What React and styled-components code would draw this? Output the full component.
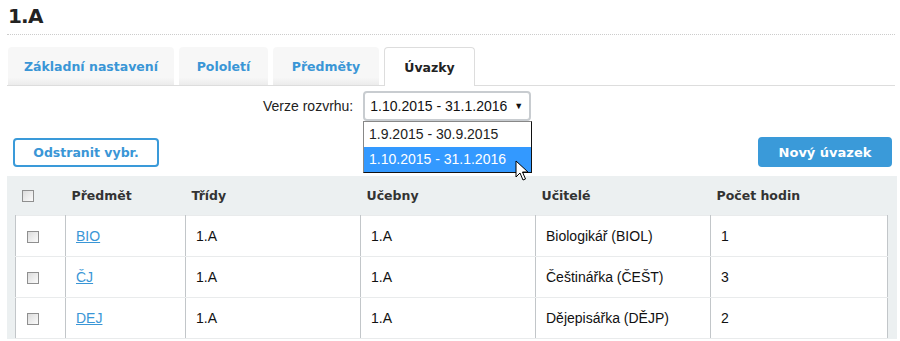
import React from 'react';
import styled, { createGlobalStyle } from 'styled-components';

const GlobalStyle = createGlobalStyle`
  html, body { margin: 0; padding: 0; background: #fff; }
  body { font-family: "Liberation Sans", Arial, sans-serif; font-size: 14px; color: #111; }
`;

const BOLD = `"DejaVu Sans", Verdana, sans-serif`;

const Page = styled.div`
  width: 900px;
  height: 341px;
  overflow: hidden;
  padding: 0 5px 0 7px;
  box-sizing: border-box;
`;

const Title = styled.h1`
  margin: 0;
  padding: 4px 0 0 1px;
  height: 30px;
  box-sizing: border-box;
  height: 35px;
  font-family: ${BOLD};
  font-size: 20px;
  font-weight: 900;
  color: #222;
  letter-spacing: -0.8px;
  border-bottom: 1px dotted #ccc;
`;

const Tabs = styled.div`
  display: flex;
  gap: 5px;
  margin-top: 11px;
  padding-left: 1px;
  border-bottom: 1px solid #ddd;
  height: 39px;
`;

const Tab = styled.div`
  width: ${p => p.w}px;
  height: ${p => (p.active ? 39 : 38)}px;
  box-sizing: border-box;
  display: flex;
  align-items: center;
  justify-content: center;
  font-family: ${BOLD};
  font-size: 12.5px;
  font-weight: bold;
  border-radius: 4px 4px 0 0;
  color: ${p => (p.active ? '#222' : '#3a96d6')};
  background: ${p => (p.active ? '#fff' : 'linear-gradient(#f7f7f7 80%, #ececec)')};
  border: ${p => (p.active ? '1px solid #ddd' : 'none')};
  border-bottom: none;
  margin-top: ${p => (p.active ? 0 : 1)}px;
  position: relative;
  top: ${p => (p.active ? 1 : 0)}px;
  padding-top: ${p => (p.active ? 1 : 0)}px;
`;

const Controls = styled.div`
  position: relative;
  height: 90px;
`;

const VersionRow = styled.div`
  display: flex;
  align-items: center;
  gap: 10px;
  padding: 5px 0 0 256px;
`;

const Label = styled.span`
  font-size: 14px;
  color: #222;
`;

const Select = styled.div`
  width: 168px;
  height: 30px;
  box-sizing: border-box;
  border: 2px solid #c8ccd0;
  border-radius: 4px;
  display: flex;
  align-items: center;
  justify-content: space-between;
  padding: 0 6px 0 5px;
  font-size: 14px;
  color: #111;
`;

const Caret = styled.span`
  font-size: 9px;
  color: #111;
`;

const Dropdown = styled.div`
  position: absolute;
  left: 356px;
  top: 35px;
  width: 169px;
  box-sizing: border-box;
  border: 1px solid #111;
  border-top-color: #888;
  border-left-color: #888;
  background: #fff;
  z-index: 5;
`;

const Option = styled.div`
  height: 25px;
  line-height: 25px;
  padding-left: 5px;
  font-size: 14px;
  color: ${p => (p.selected ? '#fff' : '#222')};
  background: ${p => (p.selected ? '#3399ff' : '#fff')};
`;

const Cursor = styled.svg`
  position: absolute;
  left: 508px;
  top: 74px;
  z-index: 6;
`;

const ButtonRow = styled.div`
  display: flex;
  justify-content: space-between;
  padding: 16px 3px 0 6px;
`;

const Button = styled.button`
  height: ${p => (p.primary ? 30 : 29)}px;
  width: ${p => p.w}px;
  border-radius: 4px;
  font-family: ${BOLD};
  font-size: ${p => (p.primary ? 13 : 12.5)}px;
  font-weight: bold;
  cursor: pointer;
  border: 2px solid #3a9ad9;
  color: ${p => (p.primary ? '#fff' : '#3a96d6')};
  background: ${p => (p.primary ? '#3a9ad9' : '#fff')};
  margin-top: ${p => (p.primary ? 0 : 1)}px;
`;

const Panel = styled.div`
  background: #ecf0f1;
  padding: 0 9px 0 8px;
  margin-right: -2px;
`;

const Table = styled.table`
  width: 100%;
  border-collapse: collapse;
  table-layout: fixed;
`;

const Th = styled.th`
  height: 39px;
  text-align: left;
  font-family: ${BOLD};
  font-size: 12.5px;
  font-weight: bold;
  color: #333;
  padding: 0 0 0 ${p => p.pl ?? 6}px;
  width: ${p => p.w}px;
  box-sizing: border-box;
`;

const Td = styled.td`
  height: 40px;
  background: #fff;
  border-left: 1px solid #c2c6c9;
  border-right: 1px solid #c2c6c9;
  border-top: 1px solid #e9ebec;
  border-bottom: 1px solid #e9ebec;
  padding: 0 0 0 ${p => p.pl ?? 10}px;
  font-size: 14px;
  color: #111;
`;

const Check = styled.span`
  display: inline-block;
  width: 12px;
  height: 12px;
  box-sizing: border-box;
  border: 1px solid #8f8f8f;
  background: linear-gradient(135deg, #dcdcdc, #fbfbfb);
  vertical-align: middle;
`;

const Link = styled.a`
  color: #3a96d6;
  text-decoration: underline;
`;

const rows = [
  ['BIO', '1.A', '1.A', 'Biologikář (BIOL)', '1'],
  ['ČJ', '1.A', '1.A', 'Češtinářka (ČEŠT)', '3'],
  ['DEJ', '1.A', '1.A', 'Dějepisářka (DĚJP)', '2'],
];

export default function App() {
  return (
    <Page>
      <GlobalStyle />
      <Title>1.A</Title>
      <Tabs>
        <Tab w={166}>Základní nastavení</Tab>
        <Tab w={89}>Pololetí</Tab>
        <Tab w={106}>Předměty</Tab>
        <Tab w={91} active>Úvazky</Tab>
      </Tabs>
      <Controls>
        <VersionRow>
          <Label>Verze rozvrhu:</Label>
          <Select>
            <span>1.10.2015 - 31.1.2016</span>
            <Caret>▼</Caret>
          </Select>
        </VersionRow>
        <Dropdown>
          <Option>1.9.2015 - 30.9.2015</Option>
          <Option selected>1.10.2015 - 31.1.2016</Option>
        </Dropdown>
        <Cursor width="14" height="22" viewBox="0 0 14 22">
          <path d="M1 1 L1 17 L5 13 L8 20 L10.5 19 L7.5 12 L13 12 Z" fill="#fff" stroke="#000" strokeWidth="1" strokeLinejoin="round" />
        </Cursor>
        <ButtonRow>
          <Button w={146}>Odstranit vybr.</Button>
          <Button w={134} primary>Nový úvazek</Button>
        </ButtonRow>
      </Controls>
      <Panel>
        <Table>
          <thead>
            <tr>
              <Th w={50} pl={6}><Check /></Th>
              <Th w={120}>Předmět</Th>
              <Th w={175}>Třídy</Th>
              <Th w={175}>Učebny</Th>
              <Th w={175}>Učitelé</Th>
              <Th>Počet hodin</Th>
            </tr>
          </thead>
          <tbody>
            {rows.map(r => (
              <tr key={r[0]}>
                <Td pl={11}><Check /></Td>
                <Td><Link href="#">{r[0]}</Link></Td>
                <Td>{r[1]}</Td>
                <Td>{r[2]}</Td>
                <Td>{r[3]}</Td>
                <Td>{r[4]}</Td>
              </tr>
            ))}
          </tbody>
        </Table>
      </Panel>
    </Page>
  );
}
